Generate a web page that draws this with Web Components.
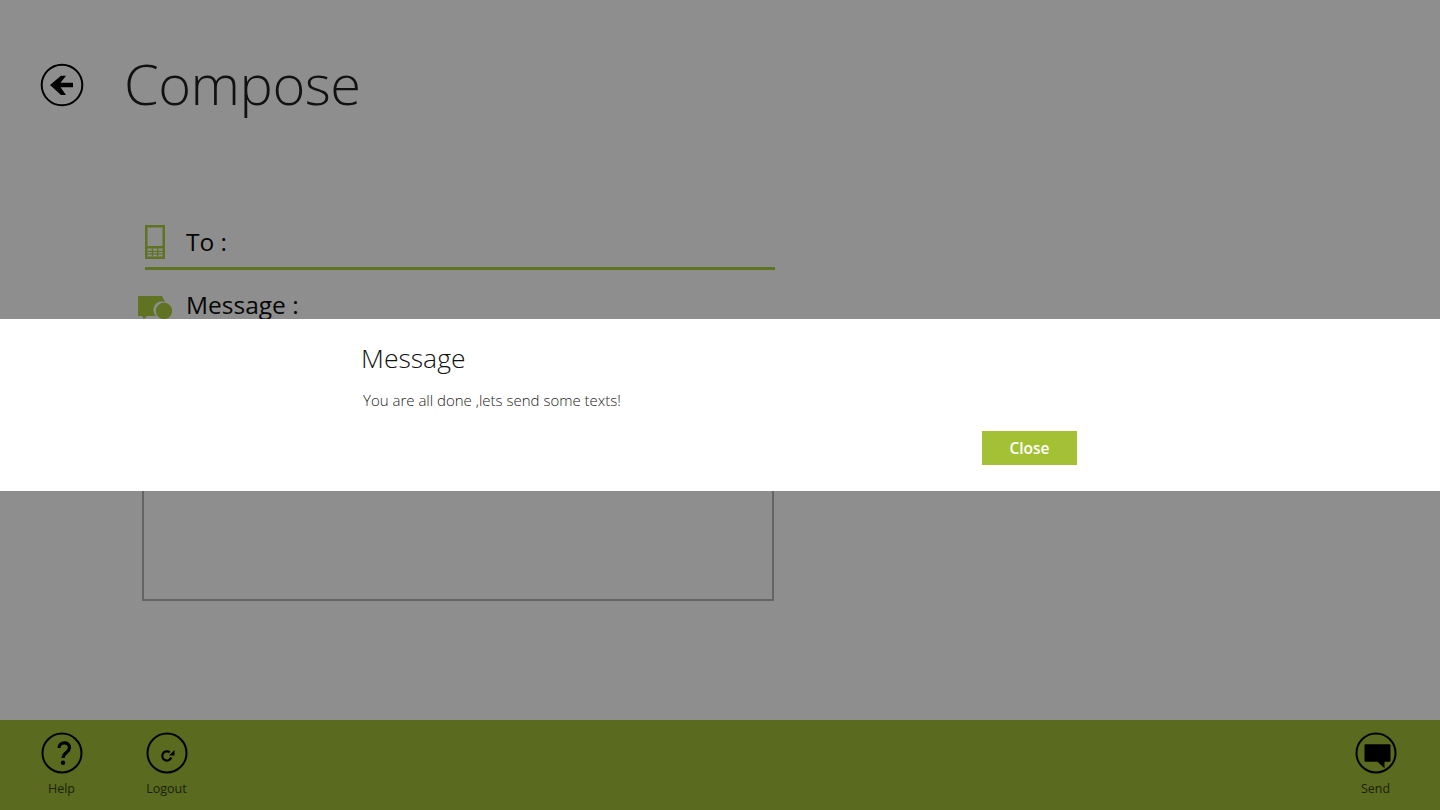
<!DOCTYPE html>
<html>
<head>
<meta charset="utf-8">
<title>Compose</title>
<style>
    html, body { margin: 0; height: 100%; background: #8e8e8e; overflow: hidden; }
    body { font-family: "Open Sans", "Noto Sans", sans-serif; color: #000; }
</style>
</head>
<body>
<compose-screen>
    <page-header slot="header" title="Compose"></page-header>
    <compose-field slot="form" label="To :" kind="phone" underline></compose-field>
    <compose-field slot="form" label="Message :" kind="chat"></compose-field>
    <message-area slot="form"></message-area>
    <app-bar slot="bar">
        <bar-button slot="left" label="Help" icon="help"></bar-button>
        <bar-button slot="left" label="Logout" icon="logout"></bar-button>
        <bar-button slot="right" label="Send" icon="send"></bar-button>
    </app-bar>
    <message-dialog slot="overlay" heading="Message" action="Close">You are all done ,lets send some texts!</message-dialog>
</compose-screen>

<script>
// --- Icons ---
const ICONS = {
    help: `<path d="M18 16c0-6.500 10.500-7 10.500-.5 0 5-6.200 5-6.400 10.500" fill="none" stroke="currentColor" stroke-width="3.200"/><circle cx="22" cy="30.700" r="2.200" fill="currentColor"/>`,
    logout: `<path d="M25.200 25.500a4.600 4.600 0 1 1-1.500-5.200" fill="none" stroke="currentColor" stroke-width="2.200"/><path d="M23 23.500h5.500V18z" fill="currentColor"/>`,
    send: `<path d="M9.500 13.300a1 1 0 0 1 1-1h24a1 1 0 0 1 1 1v15.400a1 1 0 0 1-1 1h-5v6.600l-7-6.600h-12a1 1 0 0 1-1-1z" fill="currentColor"/>`
};

// --- Page header ---
class PageHeader extends HTMLElement {
    connectedCallback() {
        this.attachShadow({ mode: 'open' }).innerHTML = `
            <style>
                :host { display: flex; align-items: center; height: 170px; padding-left: 40px; box-sizing: border-box; }
                svg { width: 44px; height: 44px; display: block; }
                h1 { margin: -4px 0 0 40px; font: 300 56px/1 "Open Sans", sans-serif; color: #111; letter-spacing: -0.5px; }
            </style>
            <svg viewBox="0 0 44 44">
                <circle cx="22" cy="22" r="20.300" fill="none" stroke="#000" stroke-width="2"/>
                <path d="M33 19.800H20.500l5.500-7.100h-5L10 22l11 10h5l-5.500-7.800H33z" fill="#000"/>
            </svg>
            <h1>${this.getAttribute('title')}</h1>
        `;
    }
}

// --- Labelled field row ---
class ComposeField extends HTMLElement {
    icon(kind) {
        if (kind === 'phone') {
            return `<svg width="20" height="34" viewBox="0 0 20 34" style="margin-left:1px">
                <path fill-rule="evenodd" fill="#5f7323" d="M0 0h20v34H0zM2.500 2.500v18.500h15V2.500zM2.500 23.500v8h15v-8z"/>
                <path fill="#5f7323" d="M2.500 25.700h15v1.300h-15zM2.500 28.300h15v1.300h-15zM6.800 23.500h1.300v8H6.800zM12 23.500h1.300v8H12z"/>
            </svg>`;
        }
        return `<svg width="36" height="28" viewBox="0 0 36 28" style="margin-left:-6px;margin-top:8px">
            <path fill="#5f7323" d="M0 0h24l3 6a8.500 8.500 0 0 0-9 14H9l-3 3-2-3H0z"/>
            <circle cx="26" cy="15" r="8.200" fill="#5f7323"/>
        </svg>`;
    }

    connectedCallback() {
        const kind = this.getAttribute('kind');
        const line = this.hasAttribute('underline');
        this.attachShadow({ mode: 'open' }).innerHTML = `
            <style>
                :host { display: block; width: 631px; box-sizing: border-box; }
                .row { display: flex; align-items: center; height: ${line ? 43 : 44}px; gap: ${kind === 'phone' ? 21 : 12}px; margin-left: ${line ? -1 : 0}px; }
                .wrap { border-bottom: ${line ? '3px solid #5f7420' : '0'}; padding-bottom: ${line ? 4 : 0}px; margin-bottom: ${line ? 14 : 0}px; margin-left: ${line ? 1 : 0}px; }
                svg { display: block; flex: none; }
                span { font: 380 24.500px/1 "Open Sans", sans-serif; color: #060606; margin-top: ${kind === 'chat' ? -2 : 2}px; }
            </style>
            <div class="wrap"><div class="row">${this.icon(kind)}<span>${this.getAttribute('label')}</span></div></div>
        `;
    }
}

// --- Empty message box ---
class MessageArea extends HTMLElement {
    connectedCallback() {
        this.attachShadow({ mode: 'open' }).innerHTML = `
            <style>
                :host { display: block; width: 632px; height: 273px; margin-left: -2px; box-sizing: border-box; border: 2px solid #646464; }
            </style>
        `;
    }
}

// --- Bottom bar ---
class BarButton extends HTMLElement {
    connectedCallback() {
        this.attachShadow({ mode: 'open' }).innerHTML = `
            <style>
                :host { display: flex; flex-direction: column; align-items: center; width: 105px; color: #000; }
                svg { display: block; width: 42px; height: 42px; margin-top: 12px; }
                span { font: 400 12.500px/18px "Open Sans", sans-serif; color: #1a1f08; margin-top: 6px; }
            </style>
            <svg viewBox="0 0 42 42">
                <circle cx="21" cy="21" r="19.500" fill="none" stroke="#000" stroke-width="2"/>
                ${ICONS[this.getAttribute('icon')]}
            </svg>
            <span>${this.getAttribute('label')}</span>
        `;
    }
}

class AppBar extends HTMLElement {
    connectedCallback() {
        this.attachShadow({ mode: 'open' }).innerHTML = `
            <style>
                :host { display: flex; justify-content: space-between; height: 90px; padding: 0 12px 0 9px; box-sizing: border-box; background: #5a6a1f; }
                div { display: flex; }
            </style>
            <div><slot name="left"></slot></div>
            <div><slot name="right"></slot></div>
        `;
    }
}

// --- Dialog band over the page ---
class MessageDialog extends HTMLElement {
    connectedCallback() {
        this.attachShadow({ mode: 'open' }).innerHTML = `
            <style>
                :host { position: absolute; left: 0; right: 0; top: 319px; height: 172px; background: #fff; display: block; }
                .inner { width: 716px; margin-left: 361px; padding-top: 21px; box-sizing: border-box; }
                h2 { margin: 0; font: 350 26.500px/36px "Open Sans", sans-serif; color: #111; }
                p { margin: 14px 0 0 2px; font: 350 15px/21px "Open Sans", sans-serif; color: #222; }
                .actions { display: flex; justify-content: flex-end; margin-top: 20px; }
                button { width: 95px; height: 34px; border: 0; padding: 0; background: #a4c135; color: #fff; font: 600 15.500px/34px "Open Sans", sans-serif; }
            </style>
            <div class="inner">
                <h2>${this.getAttribute('heading')}</h2>
                <p><slot></slot></p>
                <div class="actions"><button>${this.getAttribute('action')}</button></div>
            </div>
        `;
    }
}

// --- Whole screen ---
class ComposeScreen extends HTMLElement {
    connectedCallback() {
        this.attachShadow({ mode: 'open' }).innerHTML = `
            <style>
                :host { display: flex; flex-direction: column; position: relative; width: 1440px; height: 810px; overflow: hidden; background: #8e8e8e; }
                main { flex: 1; display: flex; flex-direction: column; }
                .form { padding: 50px 0 0 144px; display: flex; flex-direction: column; }
            </style>
            <main>
                <slot name="header"></slot>
                <div class="form"><slot name="form"></slot></div>
            </main>
            <slot name="bar"></slot>
            <slot name="overlay"></slot>
        `;
    }
}

customElements.define('page-header', PageHeader);
customElements.define('compose-field', ComposeField);
customElements.define('message-area', MessageArea);
customElements.define('bar-button', BarButton);
customElements.define('app-bar', AppBar);
customElements.define('message-dialog', MessageDialog);
customElements.define('compose-screen', ComposeScreen);
</script>
</body>
</html>
